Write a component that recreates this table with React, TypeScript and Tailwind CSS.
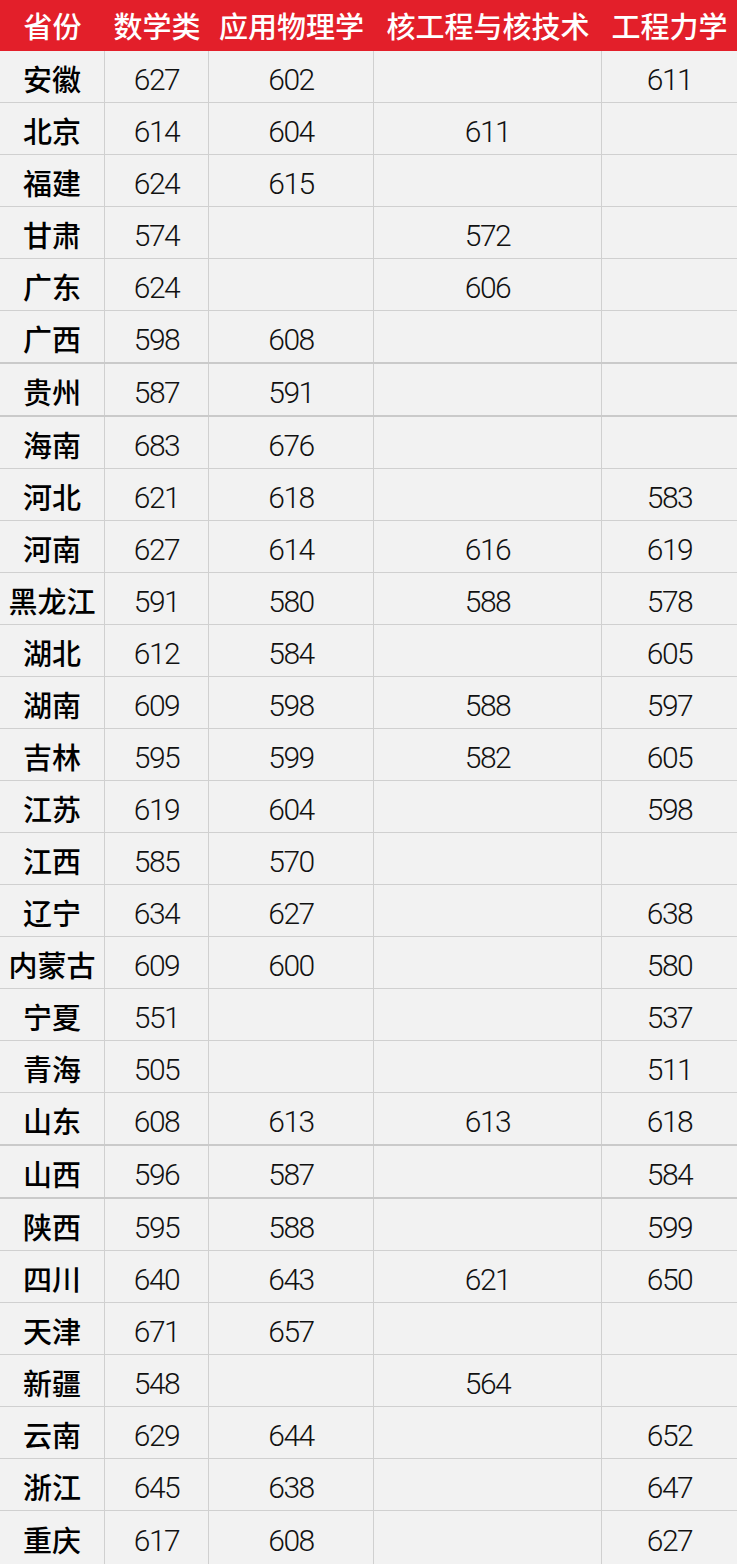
import React from "react";

type Row = [string, string, string, string, string];

const rows: Row[] = [
  ["安徽", "627", "602", "", "611"],
  ["北京", "614", "604", "611", ""],
  ["福建", "624", "615", "", ""],
  ["甘肃", "574", "", "572", ""],
  ["广东", "624", "", "606", ""],
  ["广西", "598", "608", "", ""],
  ["贵州", "587", "591", "", ""],
  ["海南", "683", "676", "", ""],
  ["河北", "621", "618", "", "583"],
  ["河南", "627", "614", "616", "619"],
  ["黑龙江", "591", "580", "588", "578"],
  ["湖北", "612", "584", "", "605"],
  ["湖南", "609", "598", "588", "597"],
  ["吉林", "595", "599", "582", "605"],
  ["江苏", "619", "604", "", "598"],
  ["江西", "585", "570", "", ""],
  ["辽宁", "634", "627", "", "638"],
  ["内蒙古", "609", "600", "", "580"],
  ["宁夏", "551", "", "", "537"],
  ["青海", "505", "", "", "511"],
  ["山东", "608", "613", "613", "618"],
  ["山西", "596", "587", "", "584"],
  ["陕西", "595", "588", "", "599"],
  ["四川", "640", "643", "621", "650"],
  ["天津", "671", "657", "", ""],
  ["新疆", "548", "", "564", ""],
  ["云南", "629", "644", "", "652"],
  ["浙江", "645", "638", "", "647"],
  ["重庆", "617", "608", "", "627"],
];

const thickAfter = new Set([5, 6, 20, 21]);

const cjk = { fontFamily: '"Noto Sans CJK SC", "Noto Sans", sans-serif' };
const num = { fontFamily: 'Roboto, "Liberation Sans", sans-serif' };

const widths = ["w-[105px]", "w-[104px]", "w-[165px]", "w-[228px]", "w-[135px]"];

export default function App() {
  const headers = ["省份", "数学类", "应用物理学", "核工程与核技术", "工程力学"];
  return (
    <div className="w-[737px] bg-[#f2f2f2]">
      <div className="flex h-[51px] bg-[#e31f2a] text-white">
        {headers.map((h, i) => (
          <div
            key={i}
            className={`${widths[i]} flex items-center justify-center text-[29px] font-medium shrink-0`}
            style={cjk}
          >
            {h}
          </div>
        ))}
      </div>
      {rows.map((r, idx) => {
        const last = idx === rows.length - 1;
        const thick = thickAfter.has(idx);
        return (
          <div
            key={idx}
            className={`flex ${last ? "h-[53px]" : thick ? "h-[53px] border-b-2 border-[#cacaca]" : "h-[52px] border-b border-[#d0d0d0]"}`}
          >
            <div
              className={`${widths[0]} shrink-0 flex items-center justify-center border-r border-[#d0d0d0] text-[29px] font-medium text-black pt-[5px]`}
              style={cjk}
            >
              {r[0]}
            </div>
            {[1, 2, 3, 4].map((c) => (
              <div
                key={c}
                className={`${widths[c]} shrink-0 flex items-center justify-center ${c < 4 ? "border-r border-[#d0d0d0]" : ""} text-[30px] font-light text-[#111] tracking-[-1.5px] pt-[6px]`}
                style={num}
              >
                {r[c]}
              </div>
            ))}
          </div>
        );
      })}
    </div>
  );
}
